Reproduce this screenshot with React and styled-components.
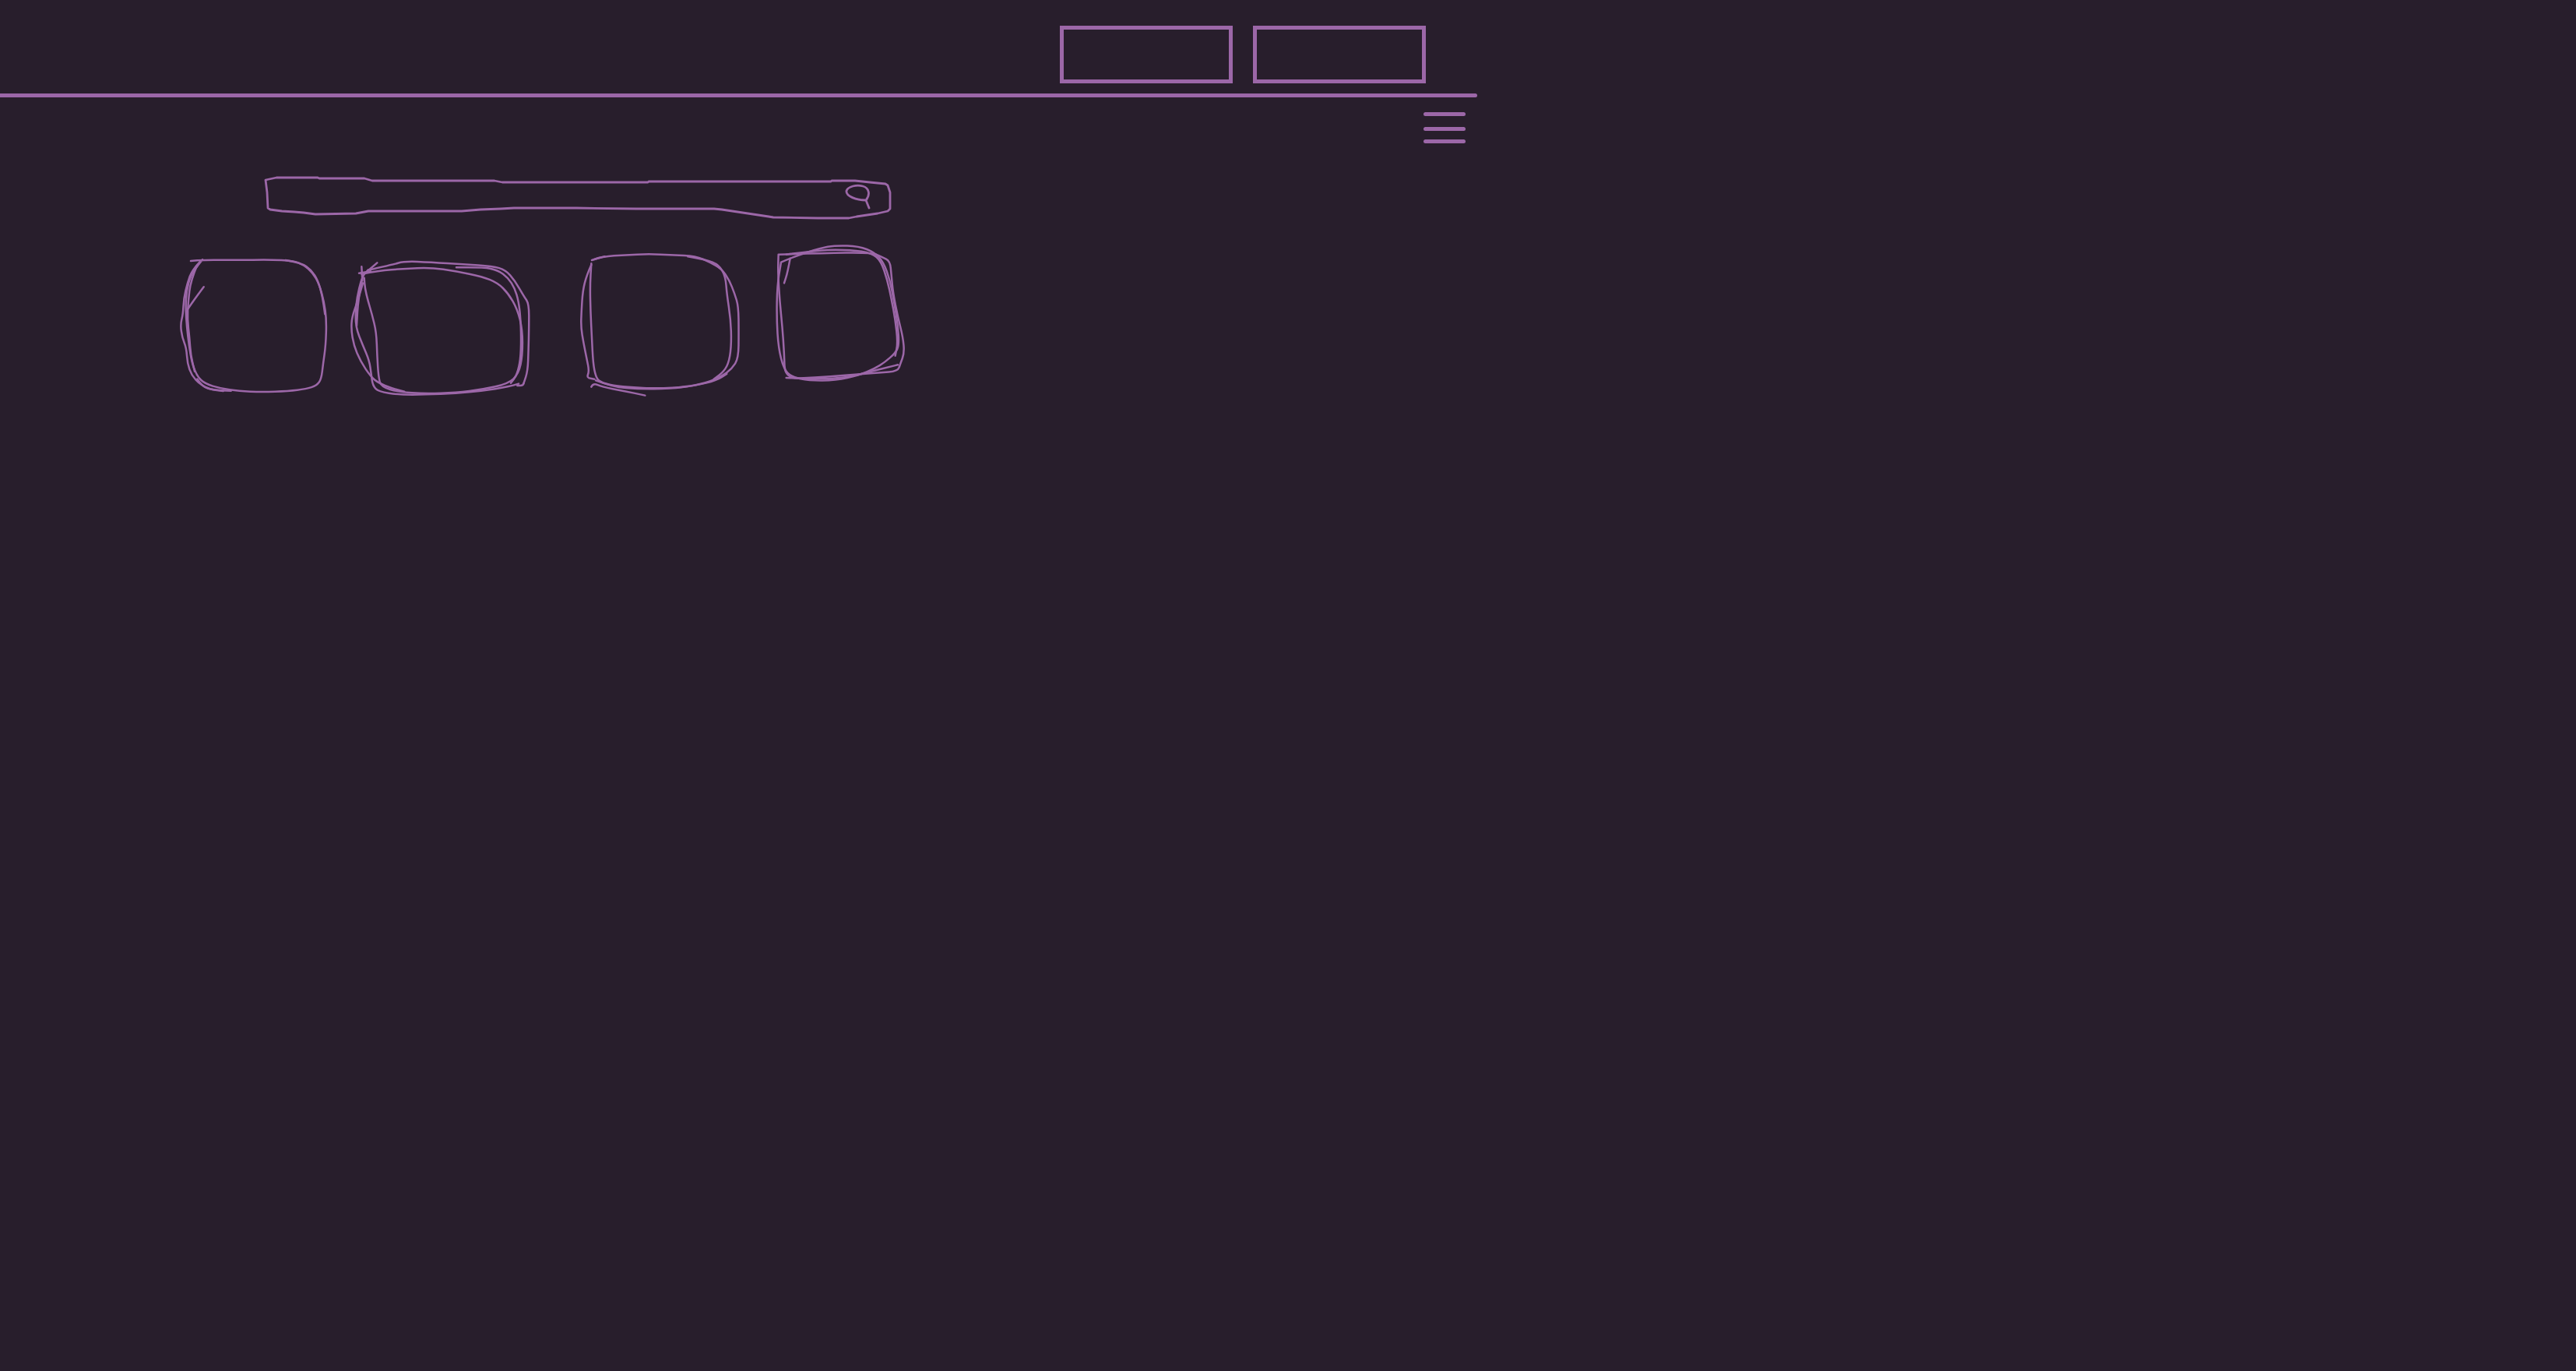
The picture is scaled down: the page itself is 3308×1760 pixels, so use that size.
import React from 'react';
import styled, { createGlobalStyle } from 'styled-components';

const INK = '#9c67a8';
const BG = '#281e2c';

const GlobalStyle = createGlobalStyle`
  html, body {
    margin: 0;
    padding: 0;
    background-color: ${BG};
    font-family: "Liberation Sans", Arial, sans-serif;
  }
`;

const Page = styled.div`
  min-height: 100vh;
  background-color: ${BG};
`;

const Header = styled.div`
  width: 1897px;
  height: 120px;
  box-sizing: border-box;
  display: flex;
  justify-content: flex-end;
  align-items: flex-start;
  gap: 26px;
  padding: 33px 66px 0 0;
`;

const OutlineButton = styled.button`
  width: 222px;
  height: 74px;
  box-sizing: border-box;
  border: solid 5px ${INK};
  background: transparent;
  padding: 0;
  cursor: pointer;
`;

const Divider = styled.div`
  width: 1897px;
  height: 5px;
  background-color: ${INK};
  border-radius: 0 3px 3px 0;
`;

const Toolbar = styled.div`
  width: 1897px;
  box-sizing: border-box;
  display: flex;
  justify-content: flex-end;
  padding: 19px 15px 0 0;
`;

const Hamburger = styled.div`
  width: 54px;
  display: flex;
  flex-direction: column;
  cursor: pointer;
`;

const Bar = styled.span`
  display: block;
  height: 5px;
  margin-top: ${p => p.$top || 0}px;
  border-radius: 3px;
  background-color: ${INK};
`;

const Content = styled.div`
  padding-left: 336px;
  margin-top: 38px;
`;

const SearchSketch = styled.svg`
  display: block;
  width: 812px;
  height: 64px;
`;

const SketchRow = styled.div`
  display: flex;
  align-items: flex-start;
  margin: 24px 0 0 230px;
`;

const Sketch = styled.svg`
  display: block;
  height: 205px;
  margin-left: ${p => p.$left || 0}px;
  flex-shrink: 0;
`;

// turns a list of points into a smooth pen stroke
const smooth = (pts) => {
  if (pts.length < 3) return 'M' + pts.map(p => p.join(',')).join(' L');
  let d = `M${pts[0][0]},${pts[0][1]}`;
  for (let i = 1; i < pts.length - 1; i++) {
    const [x, y] = pts[i];
    const mx = (x + pts[i + 1][0]) / 2;
    const my = (y + pts[i + 1][1]) / 2;
    d += ` Q${x},${y} ${mx},${my}`;
  }
  const last = pts[pts.length - 1];
  d += ` L${last[0]},${last[1]}`;
  return d;
};

const boxes = [
  {
    view: [30, 0, 580, 615],
    left: 0,
    strokes: [
      [[75,75],[120,70],[250,72],[380,70],[470,74],[510,90],[545,120],[570,165],[588,230],[598,300],[595,400],[585,470],[578,530],[560,555],[520,568],[450,576],[350,580],[260,576],[190,566],[130,548],[100,520],[80,470],[68,400],[60,330],[55,260],[58,190],[75,130],[100,95],[120,70]],
      [[110,78],[80,110],[62,160],[48,220],[45,280],[35,320],[42,370],[58,410],[62,470],[78,515],[110,550],[150,570],[200,576]],
      [[440,72],[500,82],[540,110],[565,150],[582,210],[592,280]],
      [[100,530],[120,560],[160,572],[230,575]],
      [[125,175],[95,215],[65,258]],
      [[100,90],[75,150],[65,230],[62,300],[70,370],[75,440],[90,500]],
    ],
  },
  {
    view: [680, 0, 715, 615],
    left: 23,
    strokes: [
      [[760,110],[850,90],[900,76],[1000,80],[1130,88],[1240,95],[1290,110],[1325,150],[1360,210],[1380,240],[1380,330],[1378,420],[1375,500],[1360,545]],
      [[1360,545],[1358,555],[1335,555]],
      [[1340,548],[1300,560],[1200,575],[1100,585],[980,590],[880,590],[800,578],[778,555],[772,510],[765,460],[740,400],[712,330],[712,250],[725,180],[740,130],[760,110]],
      [[735,125],[800,112],[900,105],[1000,100],[1100,115],[1200,135],[1260,160],[1300,200],[1335,260],[1355,340],[1355,440],[1340,510],[1300,548],[1200,570],[1100,582],[980,586],[880,580],[810,560],[800,520],[795,440],[792,350],[775,280],[760,230],[748,180],[745,140]],
      [[740,160],[720,230],[698,290],[695,340],[705,400],[730,460],[770,520],[800,545],[850,565],[900,578]],
      [[1100,100],[1200,98],[1260,110],[1300,140],[1325,180],[1340,230],[1348,300],[1350,400],[1345,470],[1330,520],[1310,545]],
      [[735,97],[738,150]],
      [[795,82],[765,108]],
      [[725,122],[770,115]],
      [[738,140],[722,220],[716,325]],
    ],
  },
  {
    view: [60, 30, 640, 615],
    left: 55,
    strokes: [
      [[125,100],[160,88],[250,82],[340,78],[430,82],[520,86],[575,110],[620,135],[650,180],[670,230],[685,280],[686,380],[685,480],[660,520],[620,550],[560,575],[480,590],[380,596],[280,593],[200,585],[150,570],[135,550],[125,500],[120,400],[115,300],[113,200],[118,115]],
      [[118,120],[100,160],[85,220],[80,300],[78,360],[88,420],[100,480],[110,530],[100,555],[130,560]],
      [[118,590],[125,575],[160,590],[240,605],[325,623]],
      [[490,88],[560,100],[610,120],[635,165],[640,230],[655,330],[658,420],[650,490],[630,530],[590,560]],
      [[135,565],[200,590],[300,598],[420,597],[520,585],[600,565],[640,540]],
      [[120,102],[150,92],[170,88]],
    ],
  },
  {
    view: [820, 30, 520, 615],
    left: 40,
    strokes: [
      [[840,80],[1000,75],[1200,72],[1240,90],[1270,105],[1275,160],[1282,230],[1300,320],[1320,400],[1325,460],[1310,500],[1300,530],[1230,535],[1100,545],[980,555],[865,558],[862,460],[855,360],[845,260],[838,150],[840,80]],
      [[850,110],[900,88],[1000,56],[1060,45],[1150,48],[1210,72],[1245,110],[1270,180],[1285,260],[1300,350],[1305,430],[1290,460],[1250,495],[1210,520],[1150,545],[1060,565],[960,566],[890,552],[860,520],[840,440],[833,330],[835,200],[850,110]],
      [[870,80],[1000,62],[1120,62],[1200,75],[1235,105],[1260,180],[1275,250],[1290,330],[1300,420],[1290,470]],
      [[870,555],[1000,560],[1100,555],[1200,530],[1280,510],[1300,505]],
      [[885,95],[875,150],[862,190]],
    ],
  },
];

const SEARCH_OUTLINE =
  'M341,231 L355,228 L408,228 L410,229 L468,229 L478,232 L615,232 L635,232 L645,234 L832,234 L833,233 L1067,233 L1068,232 L1098,232 L1117,234 L1137,236 L1140,238 L1143,247 L1143,268 L1140,271 L1127,274 L1100,278 L1090,280 L1050,280 L993,279 L987,278 L927,269 L917,268 L817,268 L740,267 L660,267 L643,268 L617,269 L593,271 L473,271 L457,274 L405,275 L390,273 L378,272 L362,271 L347,269 L344,267 L343,247 Z';

const SEARCH_ICON =
  'M1112,257 C1100,257 1086,252 1087,245 C1089,239 1100,237 1108,239 C1116,241 1118,250 1112,257 L1116,267';

const SketchBox = ({ box }) => {
  const [x, y, w, h] = box.view;
  return (
    <Sketch
      $left={box.left}
      style={{ width: (w / 3).toFixed(1) + 'px' }}
      viewBox={`${x} ${y} ${w} ${h}`}
      fill="none"
      stroke={INK}
      strokeWidth="7.5"
      strokeLinecap="round"
      strokeLinejoin="round"
    >
      {box.strokes.map((pts, i) => (
        <path key={i} d={smooth(pts)} />
      ))}
    </Sketch>
  );
};

export default function App() {
  return (
    <Page>
      <GlobalStyle />
      <Header>
        <OutlineButton aria-label="button one" />
        <OutlineButton aria-label="button two" />
      </Header>
      <Divider />
      <Toolbar>
        <Hamburger>
          <Bar />
          <Bar $top={14} />
          <Bar $top={11} />
        </Hamburger>
      </Toolbar>
      <Content>
        <SearchSketch viewBox="336 222 812 64" fill="none" stroke={INK} strokeWidth="2.8" strokeLinejoin="round" strokeLinecap="round">
          <path d={SEARCH_OUTLINE} />
          <path d={SEARCH_ICON} />
        </SearchSketch>
      </Content>
      <SketchRow>
        {boxes.map((b, i) => (
          <SketchBox key={i} box={b} />
        ))}
      </SketchRow>
    </Page>
  );
}
